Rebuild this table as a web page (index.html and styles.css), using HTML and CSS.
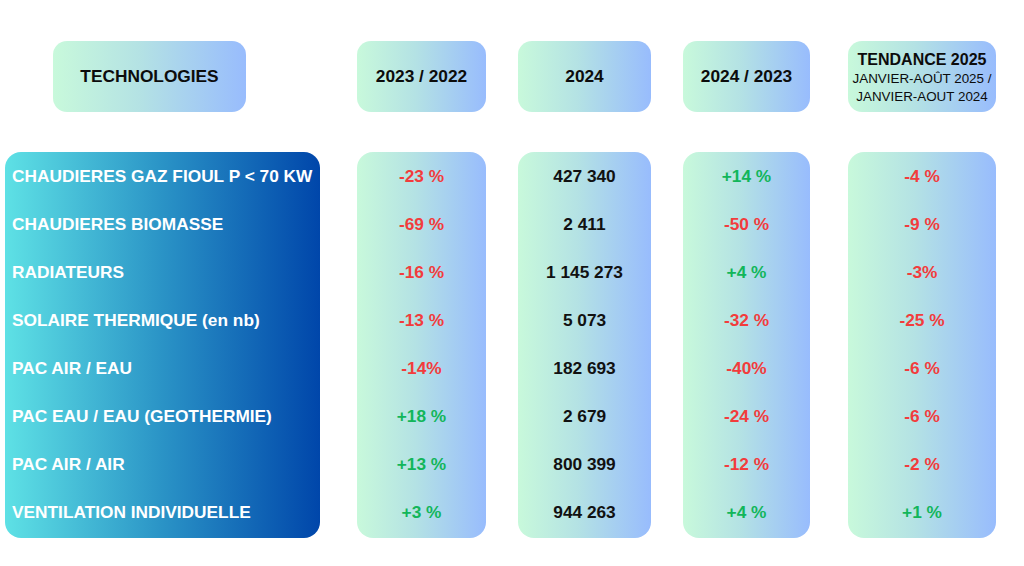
FILE: index.html
```html
<!DOCTYPE html>
<html lang="fr">
<head>
<meta charset="utf-8">
<title>Technologies</title>
<link rel="stylesheet" href="styles.css">
</head>
<body>
<div class="table">
  <div class="col col-tech">
    <div class="head head-tech">TECHNOLOGIES</div>
    <div class="body body-tech">
      <div class="row">CHAUDIERES GAZ FIOUL P &lt; 70 KW</div>
      <div class="row">CHAUDIERES BIOMASSE</div>
      <div class="row">RADIATEURS</div>
      <div class="row">SOLAIRE THERMIQUE (en nb)</div>
      <div class="row">PAC AIR / EAU</div>
      <div class="row">PAC EAU / EAU (GEOTHERMIE)</div>
      <div class="row">PAC AIR / AIR</div>
      <div class="row">VENTILATION INDIVIDUELLE</div>
    </div>
  </div>
  <div class="col col-a">
    <div class="head">2023 / 2022</div>
    <div class="body">
      <div class="row neg">-23 %</div>
      <div class="row neg">-69 %</div>
      <div class="row neg">-16 %</div>
      <div class="row neg">-13 %</div>
      <div class="row neg">-14%</div>
      <div class="row pos">+18 %</div>
      <div class="row pos">+13 %</div>
      <div class="row pos">+3 %</div>
    </div>
  </div>
  <div class="col col-b">
    <div class="head">2024</div>
    <div class="body">
      <div class="row">427 340</div>
      <div class="row">2 411</div>
      <div class="row">1 145 273</div>
      <div class="row">5 073</div>
      <div class="row">182 693</div>
      <div class="row">2 679</div>
      <div class="row">800 399</div>
      <div class="row">944 263</div>
    </div>
  </div>
  <div class="col col-c">
    <div class="head">2024 / 2023</div>
    <div class="body">
      <div class="row pos">+14 %</div>
      <div class="row neg">-50 %</div>
      <div class="row pos">+4 %</div>
      <div class="row neg">-32 %</div>
      <div class="row neg">-40%</div>
      <div class="row neg">-24 %</div>
      <div class="row neg">-12 %</div>
      <div class="row pos">+4 %</div>
    </div>
  </div>
  <div class="col col-d">
    <div class="head head-trend">
      <span class="trend-title">TENDANCE 2025</span>
      <span class="trend-sub">JANVIER-AOÛT 2025 /</span>
      <span class="trend-sub">JANVIER-AOUT 2024</span>
    </div>
    <div class="body">
      <div class="row neg">-4 %</div>
      <div class="row neg">-9 %</div>
      <div class="row neg">-3%</div>
      <div class="row neg">-25 %</div>
      <div class="row neg">-6 %</div>
      <div class="row neg">-6 %</div>
      <div class="row neg">-2 %</div>
      <div class="row pos">+1 %</div>
    </div>
  </div>
</div>
</body>
</html>
```

FILE: styles.css
```css
html, body {
  margin: 0;
  padding: 0;
  background: #ffffff;
}

body {
  font-family: "Liberation Sans", Arial, sans-serif;
  font-weight: bold;
  color: #111111;
}

.table {
  display: flex;
  align-items: flex-start;
  padding: 41px 0 0 5px;
}

.col {
  display: flex;
  flex-direction: column;
  gap: 40px;
}

.col-tech { width: 315px; }
.col-a { width: 129px; margin-left: 37px; }
.col-b { width: 133px; margin-left: 32px; }
.col-c { width: 127px; margin-left: 32px; }
.col-d { width: 148px; margin-left: 38px; }

.head {
  height: 71px;
  border-radius: 14px;
  background: linear-gradient(90deg, #c8f9db 0%, #b4e2e4 45%, #98bcfd 100%);
  display: flex;
  align-items: center;
  justify-content: center;
  font-size: 17.3px;
  color: #0c0c0c;
}

.head-tech {
  width: 193px;
  margin-left: 48px;
}

.head-trend {
  flex-direction: column;
  justify-content: flex-start;
  padding-top: 9px;
  box-sizing: border-box;
}

.trend-title {
  font-size: 16px;
  line-height: 20px;
}

.trend-sub {
  font-size: 13.4px;
  font-weight: normal;
  line-height: 18px;
}

.body {
  height: 386px;
  border-radius: 16px;
  background: linear-gradient(90deg, #c8f9db 0%, #b4e2e4 45%, #98bcfd 100%);
  display: flex;
  flex-direction: column;
  padding-top: 0;
  box-sizing: border-box;
}

.body-tech {
  background: linear-gradient(90deg, #5ee1e5 0%, #2a93c6 50%, #0046aa 100%);
  color: #ffffff;
}

.row {
  height: 48px;
  flex: none;
  display: flex;
  align-items: center;
  justify-content: center;
  font-size: 17.3px;
  white-space: nowrap;
}

.body-tech .row {
  justify-content: flex-start;
  padding-left: 7px;
}

.neg { color: #f23c3c; }
.pos { color: #12b65a; }
```
